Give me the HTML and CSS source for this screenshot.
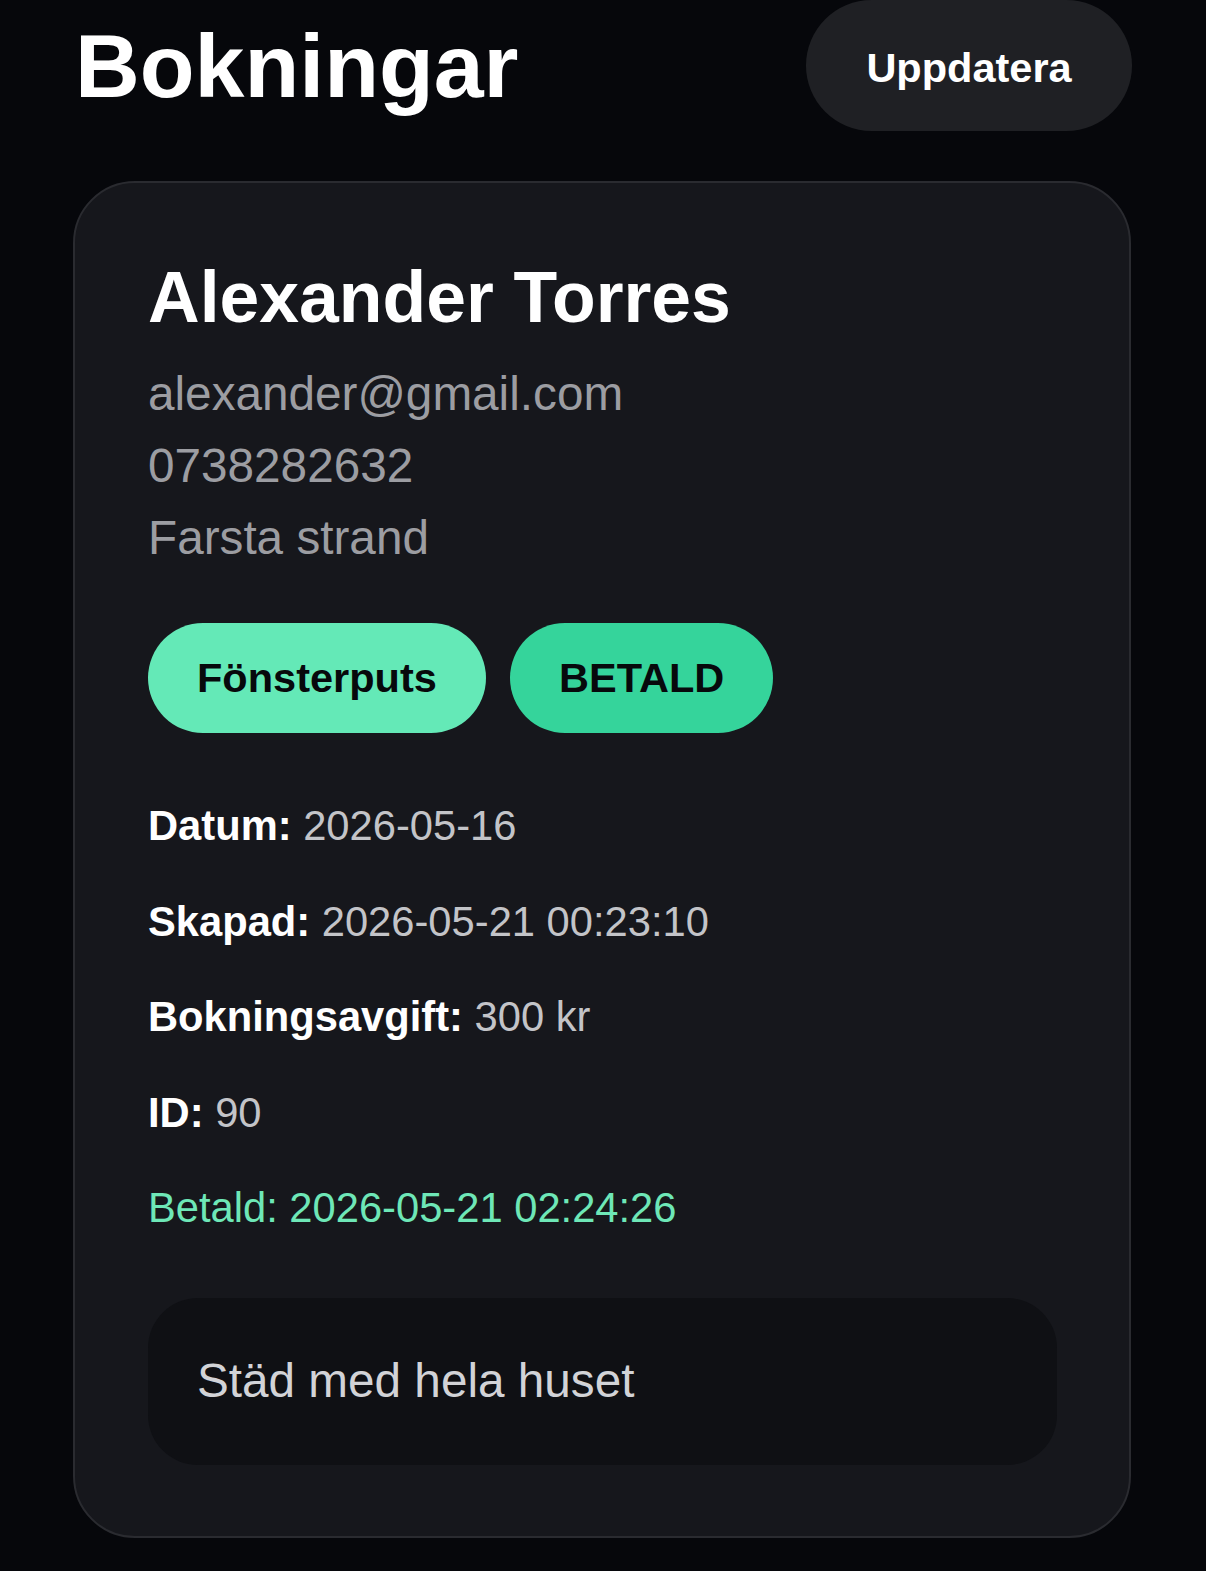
FILE: index.html
```html
<!DOCTYPE html>
<html lang="sv">
<head>
<meta charset="utf-8">
<title>Bokningar</title>
<link rel="stylesheet" href="styles.css">
</head>
<body>
<div class="page">
  <header class="header">
    <h1 class="title">Bokningar</h1>
    <button class="refresh">Uppdatera</button>
  </header>
  <section class="card">
    <h2 class="name">Alexander Torres</h2>
    <div class="contact">
      <div>alexander@gmail.com</div>
      <div>0738282632</div>
      <div>Farsta strand</div>
    </div>
    <div class="pills">
      <span class="pill pill-service">Fönsterputs</span>
      <span class="pill pill-paid">BETALD</span>
    </div>
    <div class="details">
      <div class="row"><b>Datum:</b> 2026-05-16</div>
      <div class="row"><b>Skapad:</b> 2026-05-21 00:23:10</div>
      <div class="row"><b>Bokningsavgift:</b> 300 kr</div>
      <div class="row"><b>ID:</b> 90</div>
      <div class="row row-paid">Betald: 2026-05-21 02:24:26</div>
    </div>
    <div class="note">Städ med hela huset</div>
  </section>
</div>
</body>
</html>
```

FILE: styles.css
```css
html, body {
  margin: 0;
  padding: 0;
  background: #06070b;
}
body {
  font-family: "Liberation Sans", Arial, sans-serif;
  color: #ffffff;
}
.page {
  padding: 0 75px 0 73px;
}
.header {
  display: flex;
  align-items: center;
  justify-content: space-between;
  height: 131px;
}
.title {
  margin: 0 0 0 2px;
  font-size: 89.7px;
  line-height: 88px;
  font-weight: 700;
  color: #ffffff;
}
.refresh {
  height: 131px;
  width: 326px;
  margin-right: -1px;
  border: none;
  border-radius: 66px;
  background: #1f2024;
  color: #ffffff;
  font-family: "Liberation Sans", Arial, sans-serif;
  font-weight: 700;
  font-size: 41.5px;
  padding: 4px 0 0 0;
}
.card {
  margin-top: 50px;
  border: 2px solid #2a2b30;
  border-radius: 62px;
  background: #16171c;
  padding: 72px 72px 71px 73px;
}
.name {
  margin: 0 0 18px 0;
  font-size: 71.5px;
  line-height: 85px;
  font-weight: 700;
  color: #ffffff;
}
.contact {
  font-size: 47.7px;
  line-height: 72px;
  color: #9c9da2;
}
.pills {
  display: flex;
  gap: 24px;
  margin-top: 49px;
}
.pill {
  display: inline-flex;
  align-items: center;
  height: 110px;
  padding: 0 49px;
  border-radius: 55px;
  font-size: 41.5px;
  font-weight: 700;
  color: #07090c;
}
.pill-service {
  background: #64e9b7;
  width: 240px;
}
.pill-paid {
  background: #35d49b;
}
.details {
  display: flex;
  flex-direction: column;
  gap: 38.5px;
  margin-top: 64px;
}
.row {
  font-size: 41.7px;
  line-height: 57px;
  color: #c3c4c8;
}
.row b {
  color: #ffffff;
  font-weight: 700;
}
.row-paid {
  color: #6ee7b7;
}
.note {
  margin-top: 62px;
  background: #0f1014;
  border-radius: 50px;
  padding: 48px 49px 49px 49px;
  font-size: 47.7px;
  line-height: 70px;
  color: #d2d3d7;
}
```
